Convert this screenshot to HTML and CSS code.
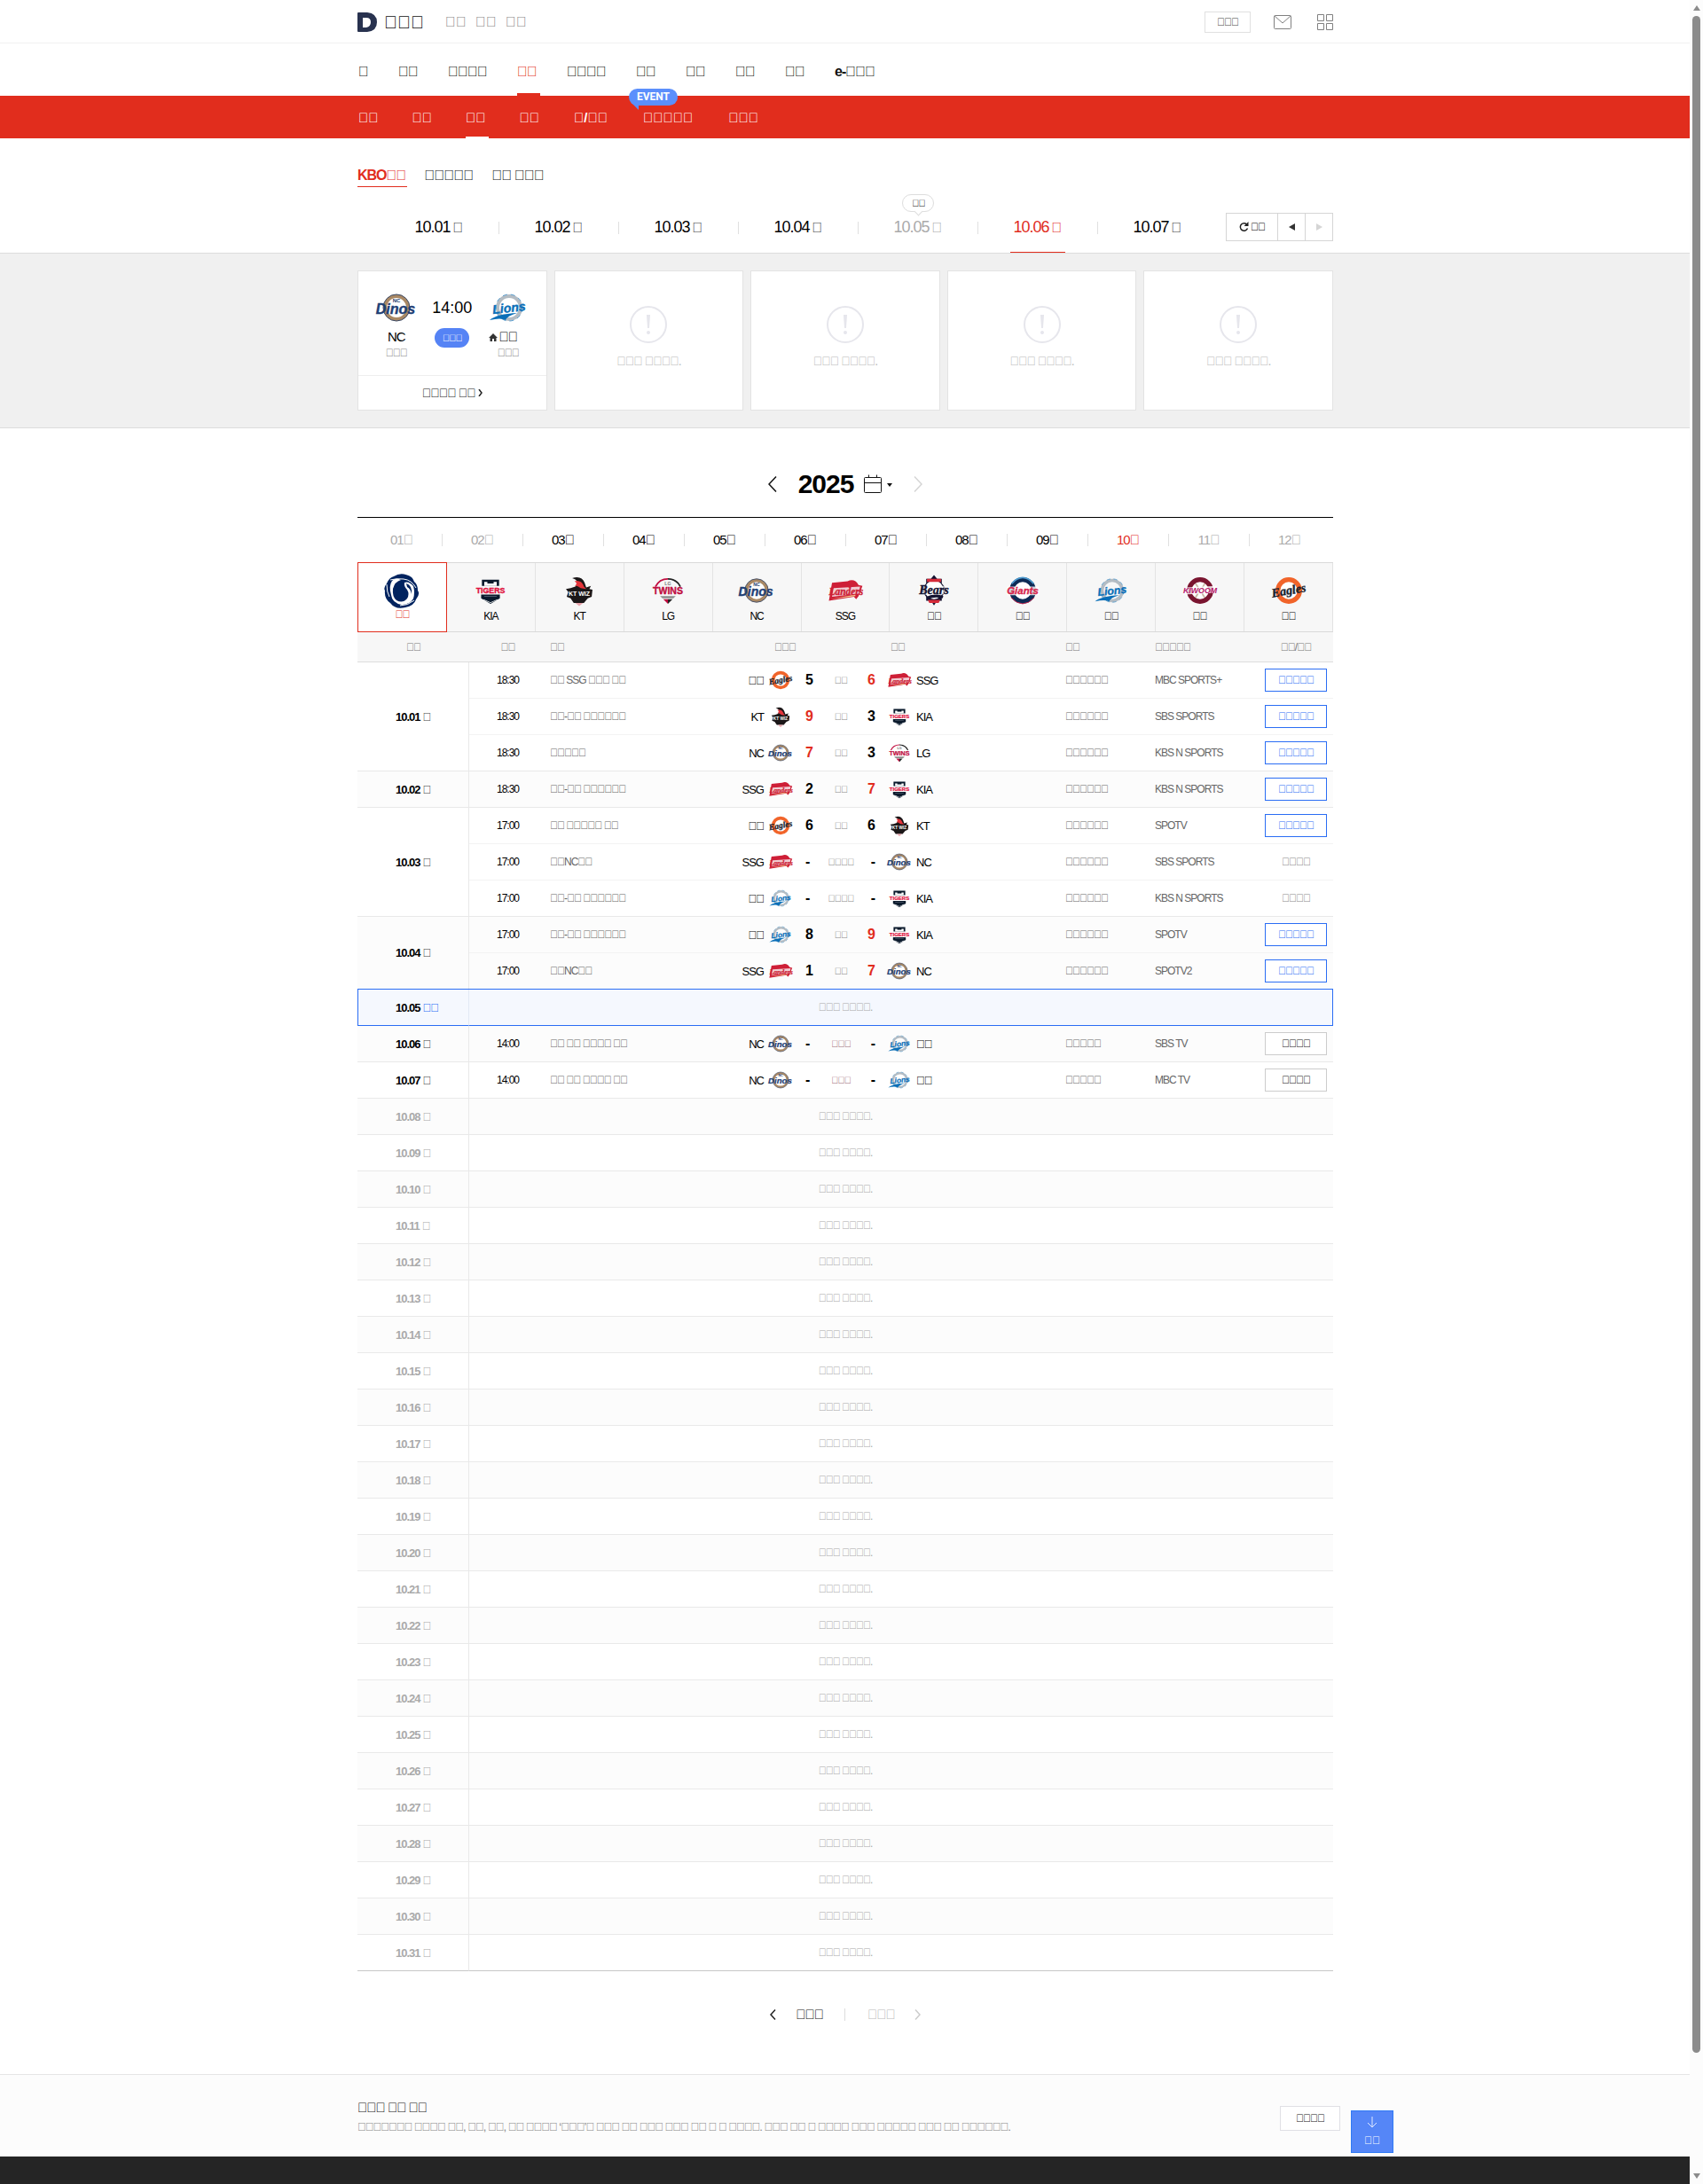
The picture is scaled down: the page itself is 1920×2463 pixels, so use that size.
FILE: index.html
```
<!DOCTYPE html>
<html lang="ko">
<head>
<meta charset="utf-8">
<meta name="viewport" content="width=device-width, initial-scale=1">
<title>KBO</title>
<link rel="stylesheet" href="styles.css">
</head>
<body>
<svg class="sprite" aria-hidden="true">
  <symbol id="kbo" viewBox="0 0 40 40">
    <circle cx="20" cy="20" r="18" fill="#fff"/>
    <path fill="#00235f" d="M11 4Q20-2 31 5Q33 7 34 10Q38 13 38 20Q41 24 36 30Q34 37 24 39Q13 42 7 34Q0 29 1 20Q-1 17 3 12Q6 5 11 4Z"/>
    <path fill="#fff" d="M9 9Q5 15 8 25Q9 34 20 36Q29 36 33 29Q35 22 33 15Q28 9 23 11Q22 15 26 19Q29 24 26 29Q21 35 14 31Q9 27 10 18Q12 10 19 8Q13 5 9 9Z"/>
    <path fill="#00235f" d="M18 10Q12 13 13 20Q16 24 15 29Q21 31 23 25Q24 19 18 16Q16 13 18 10ZM25 12Q32 14 31 24Q30 18 26 16Z"/>
    <path fill="none" stroke="#fff" d="M7 8Q14 6 22 7Q31 8 36 17M3 13Q3 22 6 27M34 31Q27 37 18 37"/>
  </symbol>
  <symbol id="tigers" viewBox="0 0 50 50">
    <path fill="#0b1a2c" d="M14 11h22v8H14zM13 30h24v5L25 42 13 35z"/>
    <path fill="#fff" d="M17 14h16v5H17zM16 36l9 4 9-4v1l-9 4-9-4z"/>
    <path fill="#0b1a2c" d="M21 13h8v3h-8z"/>
    <path fill="#5a6675" d="M17 32h16v1H17z"/>
    <text x="25" y="28" text-anchor="middle" class="mark mark-10" fill="#e0103c" stroke="#e0103c">TIGERS</text>
  </symbol>
  <symbol id="kt" viewBox="0 0 50 50">
    <path fill="#1b1718" d="M16 9Q28 5 32 15L34 21 40 19 38 23 42 24 41 33 36 35 31 41 18 41 14 35 9 33 11 27 8 23 14 22 20 20Q26 12 16 9Z"/>
    <path fill="#e3343a" d="M19 13Q28 11 31 20L34 23 27 22Q22 18 19 19Q24 16 19 13Z"/>
    <path fill="#e9a5ad" d="M20 41h10l-5 4z"/>
    <text x="25" y="32" text-anchor="middle" class="mark mark-8" fill="#fff">KT WIZ</text>
  </symbol>
  <symbol id="twins" viewBox="0 0 50 50">
    <path fill="none" stroke="#c00d3f" stroke-width="2" d="M9 20Q14 10 25 10"/>
    <path fill="none" stroke="#222" stroke-width="2" d="M25 10Q36 10 41 20"/>
    <path fill="#8d8d8d" d="M15 32h20l-3 3H18z"/>
    <path fill="#c00d3f" d="M19 36l6 6 0-6z"/><path fill="#222" d="M31 36l-6 6 0-6z"/>
    <text x="25" y="18" text-anchor="middle" class="mark mark-6" fill="#777">LG</text>
    <text x="25" y="30" text-anchor="middle" class="mark mark-12" fill="#c00d3f" stroke="#c00d3f">TWINS</text>
  </symbol>
  <symbol id="dinos" viewBox="0 0 50 50">
    <circle cx="25" cy="25" r="13" fill="#fff" stroke="#a98864" stroke-width="4"/>
    <circle cx="25" cy="25" r="15" fill="none" stroke="#3b4a66"/>
    <text x="25" y="19" text-anchor="middle" class="mark mark-6" fill="#1c3b6c">NC</text>
    <text x="24" y="32" text-anchor="middle" class="mark slant mark-16" fill="#1f4075" stroke="#1f4075">Dinos</text>
  </symbol>
  <symbol id="landers" viewBox="0 0 50 50">
    <path fill="#ce1f37" d="M8 15L28 13Q37 9 42 18L47 19 42 32 39 36 36 33 4 38Z"/>
    <path fill="#f1ccd2" d="M10 22L44 20 42 29 8 33Z"/>
    <path fill="#f3c98b" d="M6 36L38 30 38 32Z"/>
    <text x="26" y="31" text-anchor="middle" class="script mark-13" fill="#ce1f37" stroke="#ce1f37">Landers</text>
  </symbol>
  <symbol id="bears" viewBox="0 0 50 50">
    <path fill="#131230" d="M25 5l4 5h6v6l7 8-7 9v5h-6l-4 6-4-6h-6v-5l-7-9 7-8v-6h6z"/>
    <circle cx="25" cy="24" r="12" fill="#fff"/>
    <path fill="#d52b3a" d="M16 10h18v4H16zM17 37h16l-2 4H19z"/>
    <path fill="#fff" d="M6 19h38v11H6z" opacity=".7"/>
    <path fill="#131230" d="M15 33Q27 28 37 32L36 35Q26 32 18 36Z"/>
    <text x="25" y="29" text-anchor="middle" class="script mark-16" fill="#131230" stroke="#131230">Bears</text>
  </symbol>
  <symbol id="giants" viewBox="0 0 50 50">
    <circle cx="25" cy="25" r="14" fill="#fff" stroke="#0d2b55" stroke-width="6"/>
    <path fill="none" stroke="#4d9bd0" stroke-width="2" d="M11 16Q25 1 39 16"/>
    <path fill="none" stroke="#d6254c" d="M10 34Q25 50 40 34"/>
    <path fill="#fff" d="M5 20h41v11H5z" opacity=".8"/>
    <text x="25" y="30" text-anchor="middle" class="mark slant mark-13" fill="#d6254c" stroke="#d6254c">Giants</text>
  </symbol>
  <symbol id="lions" viewBox="0 0 50 50">
    <circle cx="26" cy="25" r="13" fill="none" stroke="#b4bcc3" stroke-width="4"/>
    <circle cx="26" cy="25" r="15" fill="none" stroke="#5b9fcf" stroke-dasharray="5 4"/>
    <path fill="#0a6fb8" d="M4 39Q12 32 35 31Q24 34 22 39Q17 36 4 39Z"/>
    <text x="26" y="30" text-anchor="middle" class="mark slant mark-14" fill="#0a6fb8" stroke="#0a6fb8" transform="rotate(-6 26 26)">Lions</text>
  </symbol>
  <symbol id="heroes" viewBox="0 0 50 50">
    <circle cx="25" cy="25" r="14" fill="#fff" stroke="#7a1530" stroke-width="6"/>
    <path fill="none" stroke="#c9b8a5" stroke-width="2" d="M19 16Q27 24 19 34M31 16Q24 26 31 34"/>
    <path fill="#fff" d="M3 30L6 21 47 19 43 28Z" opacity=".8"/>
    <text x="25" y="28" text-anchor="middle" class="mark slant mark-10" fill="#b6166a">KIWOOM</text>
  </symbol>
  <symbol id="eagles" viewBox="0 0 50 50">
    <circle cx="25" cy="25" r="14" fill="#fff" stroke="#f1642a" stroke-width="6"/>
    <text x="25" y="30" text-anchor="middle" class="script mark-16" fill="#16202c" stroke="#16202c" transform="rotate(-10 25 25)">Eagles</text>
  </symbol>
</svg>

<header class="top">
  <div class="wrap top-row">
    <a class="logo" href="#" aria-label="D">
      <svg width="22" height="22" viewBox="0 0 22 22"><path fill="#28324f" fill-rule="evenodd" d="M0 1Q0 0 1 0H11Q22 1 22 11Q22 21 11 22H1Q0 22 0 21ZM6 6V17H10Q15 16 15 11Q15 6 10 6Z"/></svg>
      <span>&#xE000;&#xE000;&#xE000;</span>
    </a>
    <nav class="services">
      <a href="#">&#xE000;&#xE000;</a><a href="#">&#xE000;&#xE000;</a><a href="#">&#xE000;&#xE000;</a>
    </nav>
    <div class="account">
      <button class="login" type="button">&#xE000;&#xE000;&#xE000;</button>
      <a href="#" aria-label="Mail"><svg width="20" height="16" viewBox="0 0 20 16" fill="none" stroke="#808080"><rect x=".5" y=".5" width="19" height="15" rx="1"/><path d="M1 1l9 8 9-8"/></svg></a>
      <a href="#" aria-label="Menu"><svg width="18" height="18" viewBox="0 0 18 18" fill="none" stroke="#808080"><path d="M.5.5h7v7h-7zM10.500.5h7v7h-7zM.5 10.500h7v7h-7zM10.500 10.500h7v7h-7z"/></svg></a>
    </div>
  </div>
</header>

<nav class="main-nav">
  <ul class="wrap">
    <li><a href="#">&#xE000;</a></li>
    <li><a href="#">&#xE000;&#xE000;</a></li>
    <li><a href="#">&#xE000;&#xE000;&#xE000;&#xE000;</a></li>
    <li><a href="#" class="on">&#xE000;&#xE000;</a></li>
    <li><a href="#">&#xE000;&#xE000;&#xE000;&#xE000;</a></li>
    <li><a href="#">&#xE000;&#xE000;</a></li>
    <li><a href="#">&#xE000;&#xE000;</a></li>
    <li><a href="#">&#xE000;&#xE000;</a></li>
    <li><a href="#">&#xE000;&#xE000;</a></li>
    <li><a href="#">e-&#xE000;&#xE000;&#xE000;</a></li>
  </ul>
</nav>
<nav class="sub-nav">
  <ul class="wrap">
    <li><a href="#">&#xE000;&#xE000;</a></li>
    <li><a href="#">&#xE000;&#xE000;</a></li>
    <li><a href="#" class="on">&#xE000;&#xE000;</a></li>
    <li><a href="#">&#xE000;&#xE000;</a></li>
    <li class="wide"><a href="#">&#xE000;/&#xE000;&#xE000;</a></li>
    <li class="wide"><a href="#">&#xE000;&#xE000;&#xE000;&#xE000;&#xE000;<span class="event">EVENT</span></a></li>
    <li class="wide"><a href="#">&#xE000;&#xE000;&#xE000;</a></li>
  </ul>
</nav>

<section class="days">
  <div class="wrap">
    <ul class="leagues">
      <li><a href="#" class="on">KBO&#xE000;&#xE000;</a></li>
      <li><a href="#">&#xE000;&#xE000;&#xE000;&#xE000;&#xE000;</a></li>
      <li><a href="#">&#xE000;&#xE000; &#xE000;&#xE000;&#xE000;</a></li>
    </ul>
    <div class="day-row">
      <ul class="day-list">
        <li><a href="#">10.01<span>&#xE000;</span></a></li>
        <li><a href="#">10.02<span>&#xE000;</span></a></li>
        <li><a href="#">10.03<span>&#xE000;</span></a></li>
        <li><a href="#">10.04<span>&#xE000;</span></a></li>
        <li><a href="#" class="off">10.05<span>&#xE000;</span><em class="bubble">&#xE000;&#xE000;</em></a></li>
        <li><a href="#" class="on">10.06<span>&#xE000;</span></a></li>
        <li><a href="#">10.07<span>&#xE000;</span></a></li>
      </ul>
      <div class="day-tools">
        <button type="button" class="reload"><svg width="11" height="12" viewBox="0 0 11 12" fill="none" stroke="#222" stroke-width="1.500"><path d="M9 3.500A4.200 4.200 0 1 0 9.500 7.500"/><path fill="#222" stroke="none" d="M10.500 0v5h-5z"/></svg>&#xE000;&#xE000;</button>
        <button type="button" aria-label="Previous"><svg width="7" height="10" viewBox="0 0 7 10"><path fill="#333" d="M7 1v8L0 5z"/></svg></button>
        <button type="button" aria-label="Next"><svg width="7" height="10" viewBox="0 0 7 10"><path fill="#d5d5d5" d="M0 1v8l7-4z"/></svg></button>
      </div>
    </div>
  </div>
</section>

<section class="today-games">
  <div class="wrap cards">
    <article class="card">
      <div class="game">
        <div class="side"><svg class="logo-lg"><use href="#dinos"/></svg><b>NC</b><span>&#xE000;&#xE000;&#xE000;</span></div>
        <div class="when"><strong>14<i>:</i>00</strong><em>&#xE000;&#xE000;&#xE000;</em></div>
        <div class="side"><svg class="logo-lg"><use href="#lions"/></svg><b><svg class="home-mark" width="10" height="9" viewBox="0 0 10 9"><path fill="#333" d="M5 0l5 5H8.500v4H6V6H4v3H1.500V5H0z"/></svg>&#xE000;&#xE000;</b><span>&#xE000;&#xE000;&#xE000;</span></div>
      </div>
      <a class="more" href="#">&#xE000;&#xE000;&#xE000;&#xE000; &#xE000;&#xE000;<svg width="5" height="8" viewBox="0 0 5 8" fill="none" stroke="#222" stroke-width="1.500"><path d="M1 0l3 4-3 4"/></svg></a>
    </article>
    <article class="card none"><svg width="42" height="42" viewBox="0 0 42 42"><circle cx="21" cy="21" r="20" fill="none" stroke="#e6e6ec" stroke-width="2"/><path fill="#e6e6ec" d="M19 10h4l-1 15h-2z"/><circle cx="21" cy="30" r="2" fill="#e6e6ec"/></svg><p>&#xE000;&#xE000;&#xE000; &#xE000;&#xE000;&#xE000;&#xE000;.</p></article>
    <article class="card none"><svg width="42" height="42" viewBox="0 0 42 42"><circle cx="21" cy="21" r="20" fill="none" stroke="#e6e6ec" stroke-width="2"/><path fill="#e6e6ec" d="M19 10h4l-1 15h-2z"/><circle cx="21" cy="30" r="2" fill="#e6e6ec"/></svg><p>&#xE000;&#xE000;&#xE000; &#xE000;&#xE000;&#xE000;&#xE000;.</p></article>
    <article class="card none"><svg width="42" height="42" viewBox="0 0 42 42"><circle cx="21" cy="21" r="20" fill="none" stroke="#e6e6ec" stroke-width="2"/><path fill="#e6e6ec" d="M19 10h4l-1 15h-2z"/><circle cx="21" cy="30" r="2" fill="#e6e6ec"/></svg><p>&#xE000;&#xE000;&#xE000; &#xE000;&#xE000;&#xE000;&#xE000;.</p></article>
    <article class="card none"><svg width="42" height="42" viewBox="0 0 42 42"><circle cx="21" cy="21" r="20" fill="none" stroke="#e6e6ec" stroke-width="2"/><path fill="#e6e6ec" d="M19 10h4l-1 15h-2z"/><circle cx="21" cy="30" r="2" fill="#e6e6ec"/></svg><p>&#xE000;&#xE000;&#xE000; &#xE000;&#xE000;&#xE000;&#xE000;.</p></article>
  </div>
</section>

<main class="wrap">
  <div class="year">
    <button type="button" aria-label="Previous year"><svg width="10" height="18" viewBox="0 0 10 18" fill="none" stroke="#111" stroke-width="1.500"><path d="M9 .5L1 9l8 8.500"/></svg></button>
    <h2>2025</h2>
    <button type="button" class="calendar" aria-label="Calendar"><svg width="32" height="22" viewBox="0 0 32 22" fill="none" stroke="#111"><rect x=".5" y="3.500" width="19" height="17" rx="1"/><path d="M.5 9.500h19M5.500.5v3M14.500.5v3"/><path fill="#111" stroke="none" d="M26 10h6l-3 4z"/></svg></button>
    <button type="button" aria-label="Next year"><svg width="10" height="18" viewBox="0 0 10 18" fill="none" stroke="#d5d5d5" stroke-width="1.500"><path d="M1 .5L9 9l-8 8.500"/></svg></button>
  </div>
  <ul class="months">
    <li><a href="#" class="off">01&#xE000;</a></li>
    <li><a href="#" class="off">02&#xE000;</a></li>
    <li><a href="#">03&#xE000;</a></li>
    <li><a href="#">04&#xE000;</a></li>
    <li><a href="#">05&#xE000;</a></li>
    <li><a href="#">06&#xE000;</a></li>
    <li><a href="#">07&#xE000;</a></li>
    <li><a href="#">08&#xE000;</a></li>
    <li><a href="#">09&#xE000;</a></li>
    <li><a href="#" class="on">10&#xE000;</a></li>
    <li><a href="#" class="off">11&#xE000;</a></li>
    <li><a href="#" class="off">12&#xE000;</a></li>
  </ul>
  <ul class="teams">
    <li class="on"><a href="#"><svg class="logo-kbo"><use href="#kbo"/></svg>&#xE000;&#xE000;</a></li>
    <li><a href="#"><svg class="logo-md"><use href="#tigers"/></svg>KIA</a></li>
    <li><a href="#"><svg class="logo-md"><use href="#kt"/></svg>KT</a></li>
    <li><a href="#"><svg class="logo-md"><use href="#twins"/></svg>LG</a></li>
    <li><a href="#"><svg class="logo-md"><use href="#dinos"/></svg>NC</a></li>
    <li><a href="#"><svg class="logo-md"><use href="#landers"/></svg>SSG</a></li>
    <li><a href="#"><svg class="logo-md"><use href="#bears"/></svg>&#xE000;&#xE000;</a></li>
    <li><a href="#"><svg class="logo-md"><use href="#giants"/></svg>&#xE000;&#xE000;</a></li>
    <li><a href="#"><svg class="logo-md"><use href="#lions"/></svg>&#xE000;&#xE000;</a></li>
    <li><a href="#"><svg class="logo-md"><use href="#heroes"/></svg>&#xE000;&#xE000;</a></li>
    <li><a href="#"><svg class="logo-md"><use href="#eagles"/></svg>&#xE000;&#xE000;</a></li>
  </ul>

  <table class="schedule" id="schedule">
    <colgroup>
      <col class="c-date"><col class="c-time"><col class="c-title"><col class="c-away"><col class="c-state"><col class="c-home"><col class="c-park"><col class="c-tv"><col class="c-link">
    </colgroup>
    <thead>
      <tr>
        <th scope="col">&#xE000;&#xE000;</th>
        <th scope="col">&#xE000;&#xE000;</th>
        <th scope="col" class="start">&#xE000;&#xE000;</th>
        <th scope="col" class="away-head">&#xE000;&#xE000;&#xE000;</th>
        <td></td>
        <th scope="col" class="home-head">&#xE000;&#xE000;</th>
        <th scope="col" class="start">&#xE000;&#xE000;</th>
        <th scope="col" class="start">&#xE000;&#xE000;&#xE000;&#xE000;&#xE000;</th>
        <th scope="col">&#xE000;&#xE000;/&#xE000;&#xE000;</th>
      </tr>
    </thead>
  </table>

  <div class="pager">
    <a href="#"><svg width="7" height="12" viewBox="0 0 7 12" fill="none" stroke="#222" stroke-width="1.500"><path d="M6 .5L1 6l5 5.500"/></svg>&#xE000;&#xE000;&#xE000;</a>
    <a href="#" class="off">&#xE000;&#xE000;&#xE000;<svg width="7" height="12" viewBox="0 0 7 12" fill="none" stroke="#ccc" stroke-width="1.500"><path d="M1 .5L6 6l-5 5.500"/></svg></a>
  </div>
</main>

<footer>
  <div class="notice">
    <div class="wrap notice-row">
      <div>
        <h3>&#xE000;&#xE000;&#xE000; &#xE000;&#xE000; &#xE000;&#xE000;</h3>
        <p>&#xE000;&#xE000;&#xE000;&#xE000;&#xE000;&#xE000;&#xE000; &#xE000;&#xE000;&#xE000;&#xE000; &#xE000;&#xE000;, &#xE000;&#xE000;, &#xE000;&#xE000;, &#xE000;&#xE000; &#xE000;&#xE000;&#xE000;&#xE000; ‘&#xE000;&#xE000;&#xE000;’&#xE000; &#xE000;&#xE000;&#xE000; &#xE000;&#xE000; &#xE000;&#xE000;&#xE000; &#xE000;&#xE000;&#xE000; &#xE000;&#xE000; &#xE000; &#xE000; &#xE000;&#xE000;&#xE000;&#xE000;. &#xE000;&#xE000;&#xE000; &#xE000;&#xE000; &#xE000; &#xE000;&#xE000;&#xE000;&#xE000; &#xE000;&#xE000;&#xE000; &#xE000;&#xE000;&#xE000;&#xE000;&#xE000; &#xE000;&#xE000;&#xE000; &#xE000;&#xE000; &#xE000;&#xE000;&#xE000;&#xE000;&#xE000;&#xE000;.</p>
      </div>
      <button type="button" class="ask">&#xE000;&#xE000;&#xE000;&#xE000;</button>
      <button type="button" class="jump"><svg width="12" height="13" viewBox="0 0 12 13" fill="none" stroke="#dfe8ff"><path d="M6 0v12M1 7l5 5 5-5"/></svg>&#xE000;&#xE000;</button>
    </div>
  </div>
  <div class="base"></div>
</footer>

<div class="scrollbar" aria-hidden="true"><i class="up"></i><i class="thumb"></i><i class="down"></i></div>
<script src="script.js"></script>
</body>
</html>
```
FILE: styles.css
```
* { box-sizing: border-box; }
body {
  margin: 0;
  padding-right: 14px;
  min-height: 100vh;
  display: flex;
  flex-direction: column;
  font-family: "Liberation Sans", Arial, sans-serif;
  font-size: 12px;
  letter-spacing: -1px;
  color: #000;
  background: #fff;
}
a { color: inherit; text-decoration: none; }
ul { list-style: none; margin: 0; padding: 0; }
h2, h3, p { margin: 0; }
i, em { font-style: normal; }
svg { display: block; flex: none; }
button {
  font: inherit;
  letter-spacing: inherit;
  color: inherit;
  background: none;
  border: 0;
  padding: 0;
}
.sprite { display: none; }
.wrap { width: 100%; max-width: 1100px; margin: 0 auto; }

/* lettering inside the club emblems */
.mark, .script { font-weight: 700; letter-spacing: 0; stroke-width: .4; }
.script { font-family: "Liberation Serif", serif; font-style: italic; }
.slant { font-style: italic; }
.mark-6 { font-size: 6px; }
.mark-8 { font-size: 8px; }
.mark-10 { font-size: 10px; }
.mark-12 { font-size: 12px; }
.mark-13 { font-size: 13px; }
.mark-14 { font-size: 14px; }
.mark-16 { font-size: 16px; }

.top { border-bottom: 1px solid #f1f1f1; }
.top-row { display: flex; align-items: center; height: 48px; padding-top: 2px; }
.logo { display: flex; align-items: center; gap: 8px; font-size: 20px; letter-spacing: 0; color: #111; }
.services { display: flex; gap: 10px; margin-left: 24px; font-size: 16px; letter-spacing: 0; color: #888; }
.account { display: flex; align-items: center; margin-left: auto; }
.login { width: 52px; height: 24px; border: 1px solid #e0e0e0; color: #444; margin-right: 26px; }
.account a + a { margin-left: 29px; }

.main-nav ul, .sub-nav ul { display: flex; padding-left: 1px; font-weight: 700; }
.main-nav ul { gap: 34px; padding-top: 4px; font-size: 16px; line-height: 55px; color: #111; }
.main-nav a, .sub-nav a { position: relative; display: block; }
.main-nav .on { color: #e12d1d; }
.main-nav .on::after, .sub-nav .on::after {
  content: "";
  position: absolute;
  left: 0;
  bottom: 0;
  width: 26px;
  height: 3px;
  background: #e12d1d;
}
.sub-nav { background: #e12d1d; color: #fff; }
.sub-nav ul { gap: 38px; padding-top: 2px; font-size: 15px; line-height: 46px; letter-spacing: 0; }
.sub-nav .on::after { height: 2px; background: #fff; }
.sub-nav .wide { padding: 0 1px; }
.event {
  position: absolute;
  left: -16px;
  top: -10px;
  width: 55px;
  height: 19px;
  border-radius: 10px;
  background: #5b8ffc;
  font: 700 12px/19px Roboto, sans-serif;
  text-align: center;
}
.event::after {
  content: "";
  position: absolute;
  left: 4px;
  top: 17px;
  border-style: solid;
  border-width: 0 7px 7px 0;
  border-color: transparent #5b8ffc transparent transparent;
}

.days { border-bottom: 1px solid #ddd; padding-top: 30px; }
.leagues { display: flex; gap: 20px; font-size: 16px; line-height: 24px; color: #111; }
.leagues a { display: block; padding-right: 1px; border-bottom: 1px solid transparent; }
.leagues .on { color: #e12d1d; font-weight: 700; border-color: #e12d1d; }
.day-row { display: flex; align-items: center; justify-content: space-between; margin-top: 16px; }
.day-list { display: flex; padding-left: 24px; font-size: 18px; line-height: 58px; }
.day-list li { position: relative; width: 135px; display: flex; justify-content: center; }
.day-list li + li::before, .months li + li::before {
  content: "";
  position: absolute;
  left: 0;
  top: 23px;
  width: 1px;
  height: 14px;
  background: #e0e0e0;
}
.day-list a { position: relative; padding: 0 3px; }
.day-list span { font-size: 16px; line-height: 20px; margin-left: 3px; color: #444; }
.day-list .off, .day-list .off span { color: #aaa; }
.day-list .on, .day-list .on span { color: #e12d1d; }
.day-list .on::after {
  content: "";
  position: absolute;
  left: 0;
  bottom: 0;
  width: 62px;
  height: 1px;
  background: #e12d1d;
}
.bubble {
  position: absolute;
  left: 13px;
  top: -8px;
  width: 36px;
  height: 20px;
  border: 1px solid #ddd;
  border-radius: 10px;
  background: #fff;
  color: #222;
  font-size: 11px;
  line-height: 18px;
  text-align: center;
}
.bubble::after {
  content: "";
  position: absolute;
  left: 14px;
  bottom: -4px;
  width: 6px;
  height: 6px;
  border: solid #ddd;
  border-width: 0 1px 1px 0;
  background: #fff;
  transform: rotate(45deg);
}
.day-tools { display: flex; border: 1px solid #d5d5d5; }
.day-tools button { display: flex; align-items: center; justify-content: center; gap: 2px; width: 31px; height: 30px; }
.day-tools .reload { width: 57px; }
.day-tools button + button { border-left: 1px solid #d5d5d5; }

.today-games { background: #f0f0f0; border-bottom: 1px solid #ddd; padding: 19px 0; }
.cards { display: grid; grid-template-columns: repeat(5, 1fr); gap: 8px; }
.card { display: flex; flex-direction: column; height: 158px; background: #fff; border: 1px solid #e3e3e3; }
.game { display: grid; grid-template-columns: repeat(3, 63px); justify-content: center; flex: 1; padding-top: 16px; }
.side { display: flex; flex-direction: column; align-items: center; }
.side b { display: flex; align-items: center; gap: 2px; font-size: 15px; font-weight: 400; line-height: 16px; }
.side span { line-height: 20px; color: #888; }
.home-mark { margin-left: -12px; }
.logo-lg { width: 50px; height: 50px; }
.when { display: flex; flex-direction: column; align-items: center; gap: 12px; padding-top: 14px; }
.when strong { font-size: 18px; font-weight: 400; line-height: 22px; letter-spacing: 0; }
.when em { width: 39px; border-radius: 11px; background: #5583f5; color: #fff; font-size: 11px; line-height: 22px; text-align: center; }
.more { display: flex; align-items: center; justify-content: center; gap: 3px; height: 39px; border-top: 1px solid #eee; font-size: 14px; color: #222; }
.none { align-items: center; gap: 10px; padding-top: 39px; font-size: 14px; line-height: 20px; color: #bbb; }

.year { display: flex; align-items: center; justify-content: center; height: 101px; padding-top: 26px; border-bottom: 1px solid #000; }
.year h2 { font-size: 30px; margin: 0 12px 0 24px; }
.year .calendar { margin-right: 24px; }
.months { display: flex; padding: 0 4px; font-size: 15px; line-height: 50px; text-align: center; }
.months li { position: relative; flex: 1; }
.months li + li::before { top: 18px; }
.months a { display: block; }
.months .off { color: #aaa; }
.months .on { color: #e12d1d; }

.teams { display: flex; height: 79px; border: solid #d9d9d9; border-width: 1px 0; background: #f7f7f7; }
.teams li { flex: 1; border-right: 1px solid #e3e3e3; }
.teams a { display: flex; flex-direction: column; align-items: center; justify-content: space-between; height: 65px; padding-top: 9px; line-height: 14px; }
.teams .on { margin: -1px 0; border: 1px solid #e12d1d; background: #fff; color: #e12d1d; }
.teams .on a { padding-top: 11px; }
.logo-md { width: 44px; height: 44px; }
.logo-kbo { width: 40px; height: 40px; }
.teams .logo-kbo { margin-bottom: -1px; }

.schedule { width: 100%; table-layout: fixed; border-spacing: 0; }
.c-date { width: 126px; }
.c-time { width: 87px; }
.c-title { width: 200px; }
.c-away { width: 110px; }
.c-state { width: 44px; }
.c-park { width: 101px; }
.c-tv { width: 121px; }
.c-link { width: 84px; }
.schedule th, .schedule td { padding: 0; font-weight: 400; text-align: center; }
.schedule thead th, .schedule thead td { height: 34px; background: #f7f7f7; border-bottom: 1px solid #ddd; color: #777; }
.schedule .start { text-align: left; padding-left: 4px; }
.schedule .away-head { text-align: right; padding-right: 29px; }
.schedule .home-head { text-align: left; padding-left: 34px; }
.schedule tbody td, .schedule tbody th { height: 41px; border-bottom: 1px solid #f3f3f3; }
.schedule tbody tr:last-child td, .schedule tbody th { border-bottom-color: #e9e9e9; }
.schedule tbody:nth-of-type(even) { background: #fcfcfc; }
.schedule tbody th { border-right: 1px solid #e9e9e9; padding-left: 43px; text-align: left; font-size: 13px; }
.schedule tbody th b { margin-right: 3px; }
.schedule tbody th span { color: #444; }
.schedule .idle th b, .schedule .idle th span { color: #aaa; }
.schedule tbody .title, .schedule tbody .park, .schedule tbody .tv { color: #666; text-align: left; padding-left: 4px; }
.away, .home { display: flex; align-items: center; font-size: 13px; }
.away { justify-content: flex-end; gap: 4px; padding-right: 9px; }
.home { gap: 4px; padding-left: 8px; }
.away strong { min-width: 9px; margin-left: 9px; text-align: left; }
.home strong { min-width: 9px; margin-right: 8px; text-align: right; }
.away strong, .home strong { font-size: 16px; letter-spacing: 0; }
.logo-sm { width: 30px; height: 30px; }
.schedule .win { color: #e12d1d; }
.schedule .state { font-size: 11px; color: #888; }
.schedule .state.red { color: #a06d78; }
.schedule .link { color: #888; }
.link button { width: 70px; height: 26px; border: 1px solid #2a6df4; background: #fff; color: #2a6df4; }
.link .plain { border-color: #ccc; color: #111; }
.schedule tbody .empty { padding-right: 126px; color: #aaa; }
.schedule tbody.today { background: #f5f8fe; }
.schedule tbody.today tr th, .schedule tbody.today tr:last-child td { border-bottom-color: #2a6df4; }
.schedule .today th { border-right-color: #e3e9f5; box-shadow: 0 -1px 0 #2a6df4, inset 1px 0 0 #2a6df4; }
.schedule .today td { box-shadow: 0 -1px 0 #2a6df4, inset -1px 0 0 #2a6df4; }
.schedule .today th span { color: #2a6df4; }
.schedule tbody:last-child tr th, .schedule tbody:last-child tr:last-child td { border-bottom-color: #c8c8c8; }

.pager { display: flex; justify-content: center; padding: 40px 0 58px; font-size: 15px; line-height: 18px; color: #111; }
.pager a { display: flex; align-items: center; gap: 22px; }
.pager a + a { position: relative; margin-left: 24px; padding-left: 26px; }
.pager a + a::before { content: ""; position: absolute; left: 0; top: 2px; width: 1px; height: 14px; background: #ddd; }
.pager .off { color: #bbb; }

footer { flex: 1; display: flex; flex-direction: column; }
.notice { border-top: 1px solid #e5e5e5; background: #fcfcfc; padding: 27px 0 21px; }
.notice-row { position: relative; display: flex; justify-content: space-between; align-items: flex-start; }
.notice h3 { font-size: 15px; font-weight: 400; line-height: 20px; color: #111; }
.notice p { font-size: 13px; line-height: 24px; color: #888; }
.ask { width: 68px; height: 28px; margin: 8px -8px 0 0; border: 1px solid #e0e0e5; background: #fff; color: #111; }
.jump {
  position: absolute;
  left: calc(100% + 20px);
  top: 13px;
  width: 48px;
  height: 48px;
  display: flex;
  flex-direction: column;
  align-items: center;
  justify-content: center;
  gap: 7px;
  background: #5586f7;
  border: 1px solid #2f7af5;
  color: #fff;
  letter-spacing: 0;
}
.base { flex: 1; min-height: 31px; background: #252525; }

.scrollbar {
  position: fixed;
  top: 0;
  right: 0;
  bottom: 0;
  width: 15px;
  display: flex;
  flex-direction: column;
  align-items: center;
  padding: 6px 0;
  background: #fcfcfc;
}
.up, .down { border: 4px solid transparent; }
.up { border-top-width: 0; border-bottom: 6px solid #8b8b8b; margin-bottom: 6px; }
.down { border-bottom-width: 0; border-top: 6px solid #8b8b8b; margin-top: auto; }
.thumb { width: 9px; height: calc(94vh - 18px); border-radius: 5px; background: #8b8b8b; }
```
FILE: script.js
```
// Schedule data: '#' stands for one Hangul syllable of the feed.
const hangul = text => text.replace(/#/g, '\uE000');

const clubs = {
  KIA: ['KIA', 'tigers'], KT: ['KT', 'kt'], LG: ['LG', 'twins'], NC: ['NC', 'dinos'],
  SSG: ['SSG', 'landers'], SS: ['##', 'lions'], HH: ['##', 'eagles']
};

// time, title, away, away score, state, home, home score, park, channel, link
const days = {
  '10.01': [
    ['18:30', '## SSG ### ##', 'HH', 5, '##', 'SSG', 6, '######', 'MBC SPORTS+', '#####'],
    ['18:30', '##-## ######', 'KT', 9, '##', 'KIA', 3, '######', 'SBS SPORTS', '#####'],
    ['18:30', '#####', 'NC', 7, '##', 'LG', 3, '######', 'KBS N SPORTS', '#####']
  ],
  '10.02': [
    ['18:30', '##-## ######', 'SSG', 2, '##', 'KIA', 7, '######', 'KBS N SPORTS', '#####']
  ],
  '10.03': [
    ['17:00', '## ##### ##', 'HH', 6, '##', 'KT', 6, '######', 'SPOTV', '#####'],
    ['17:00', '##NC##', 'SSG', '-', '####', 'NC', '-', '######', 'SBS SPORTS', ''],
    ['17:00', '##-## ######', 'SS', '-', '####', 'KIA', '-', '######', 'KBS N SPORTS', '']
  ],
  '10.04': [
    ['17:00', '##-## ######', 'SS', 8, '##', 'KIA', 9, '######', 'SPOTV', '#####'],
    ['17:00', '##NC##', 'SSG', 1, '##', 'NC', 7, '######', 'SPOTV2', '#####']
  ],
  '10.06': [
    ['14:00', '## ## #### ##', 'NC', '-', '###', 'SS', '-', '#####', 'SBS TV', '####']
  ],
  '10.07': [
    ['14:00', '## ## #### ##', 'NC', '-', '###', 'SS', '-', '#####', 'MBC TV', '####']
  ]
};

const emblem = id => `<svg class="logo-sm"><use href="#${id}"/></svg>`;
const score = (own, other) => `<strong${own > other ? ' class="win"' : ''}>${own}</strong>`;

function gameCells([time, title, away, a, state, home, h, park, tv, link]) {
  const [awayName, awayLogo] = clubs[away];
  const [homeName, homeLogo] = clubs[home];
  const action = link === ''
    ? hangul('####')
    : `<button type="button"${link.length === 4 ? ' class="plain"' : ''}>${hangul(link)}</button>`;
  return `<td>${time}</td>
    <td class="title">${hangul(title)}</td>
    <td><div class="away">${hangul(awayName)}${emblem(awayLogo)}${score(a, h)}</div></td>
    <td class="state${state.length === 3 ? ' red' : ''}">${hangul(state)}</td>
    <td><div class="home">${score(h, a)}${emblem(homeLogo)}${hangul(homeName)}</div></td>
    <td class="park">${hangul(park)}</td>
    <td class="tv">${tv}</td>
    <td class="link">${action}</td>`;
}

const table = document.getElementById('schedule');
for (let day = 1; day <= 31; day++) {
  const date = '10.' + String(day).padStart(2, '0');
  const games = days[date];
  const today = day === 5;
  const body = document.createElement('tbody');
  if (today) body.className = 'today';
  else if (!games) body.className = 'idle';
  const head = `<th scope="rowgroup" rowspan="${games ? games.length : 1}"><b>${date}</b><span>${hangul(today ? '##' : '#')}</span></th>`;
  body.innerHTML = games
    ? games.map((game, i) => `<tr>${i ? '' : head}${gameCells(game)}</tr>`).join('')
    : `<tr>${head}<td class="empty" colspan="8">${hangul('### ####.')}</td></tr>`;
  table.append(body);
}
```
